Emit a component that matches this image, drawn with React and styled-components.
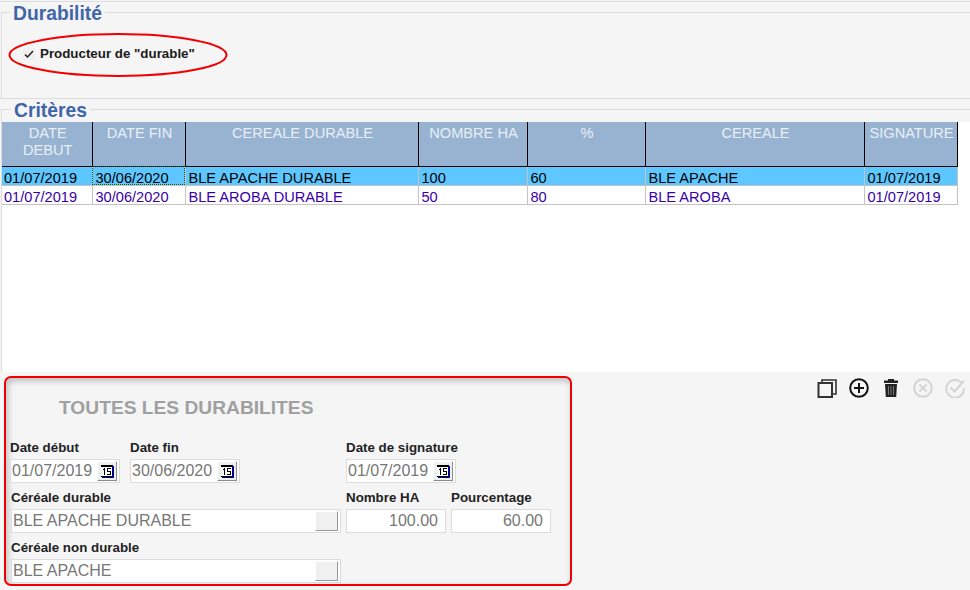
import React from 'react';
import styled, { createGlobalStyle } from 'styled-components';

const GlobalStyle = createGlobalStyle`
  html, body {
    margin: 0;
    padding: 0;
    background: #f5f5f5;
  }
  * {
    box-sizing: border-box;
  }
`;

const Page = styled.div`
  width: 970px;
  height: 590px;
  overflow: hidden;
  display: flex;
  flex-direction: column;
  background: #f5f5f5;
  font-family: "Liberation Sans", Arial, sans-serif;
  padding-top: 1px;
`;

const TopLine = styled.div`
  height: 1px;
  flex: none;
  background: #dcdcdc;
`;

const Section = styled.fieldset`
  margin: ${(props) => props.$top}px 0 0 1px;
  padding: 0;
  min-width: 0;
  flex: none;
  height: ${(props) => props.$height}px;
  border: 0;
  border-top: 1px solid #dcdcdc;
  border-left: 1px solid #dcdcdc;
`;

const SectionTitle = styled.legend`
  margin-left: ${(props) => props.$left}px;
  padding: ${(props) => props.$pad}px 3px 0;
  font-size: 19.3px;
  line-height: 20px;
  font-weight: bold;
  color: #3f66a8;
`;

const CheckRow = styled.div`
  display: flex;
  align-items: center;
  gap: 5px;
  padding: 22px 0 0 21px;
  position: relative;
  font-size: 13.33px;
  font-weight: bold;
  color: #1b1b1b;
`;

const CheckBox = styled.span`
  width: 12px;
  height: 12px;
  display: flex;
  background: #f0f0f0;
`;

const Ellipse = styled.svg`
  position: absolute;
  left: 4px;
  top: 8px;
`;

const Divider = styled.div`
  height: 1px;
  flex: none;
  background: #dcdcdc;
`;

const TableArea = styled.div`
  height: 250px;
  margin-top: 1px;
  background: #fff;
`;

const Grid = styled.table`
  width: 955px;
  border-collapse: collapse;
  table-layout: fixed;
  font-size: 14.6px;
`;

const HeadCell = styled.th`
  height: 44px;
  padding: 3px 3px 0 5px;
  vertical-align: top;
  text-align: center;
  font-weight: normal;
  line-height: 17px;
  background: #98b3d1;
  color: #e9eff6;
  border-right: 1px solid #000;
  border-bottom: 1px solid #000;
`;

const Cell = styled.td`
  height: 19px;
  padding: 4px 2px 0 3px;
  line-height: 14px;
  white-space: nowrap;
  overflow: hidden;
  color: ${(props) => (props.$selected ? '#000' : '#3a00a8')};
  background: ${(props) => (props.$selected ? '#5ec7ff' : '#fff')};
  border-right: 1px solid #c4c4c4;
  border-bottom: 1px solid #c4c4c4;
  outline: ${(props) => (props.$focus ? '1px dotted #1d5c2a' : 'none')};
  outline-offset: -1px;

  &:first-child {
    padding-left: 2px;
  }
`;

const BottomRow = styled.div`
  display: flex;
  align-items: flex-start;
  justify-content: space-between;
  padding: 4px 5px 0 4px;
`;

const FormPanel = styled.div`
  width: 568px;
  height: 210px;
  padding: 0 0 0 4px;
  border: 2px solid #f00000;
  border-radius: 7px;
  box-shadow: inset 2px 3px 6px #bdbdbd;
  background: #f5f5f5;
`;

const FormTitle = styled.div`
  margin: 20px 0 0 49px;
  height: 20px;
  font-size: 19.2px;
  line-height: 20px;
  font-weight: bold;
  color: #a0a0a0;
`;

const FieldRow = styled.div`
  display: flex;
  align-items: flex-end;
  margin-top: ${(props) => props.$top}px;
`;

const Field = styled.div`
  width: ${(props) => props.$width}px;
  margin-left: ${(props) => props.$left || 0}px;
  margin-right: ${(props) => props.$gap || 0}px;
  flex: none;
`;

const Label = styled.div`
  height: 20px;
  padding-top: 1px;
  font-size: 13.33px;
  line-height: 16px;
  font-weight: bold;
  color: #222;
  white-space: nowrap;
`;

const InputBox = styled.div`
  height: 24px;
  display: flex;
  align-items: center;
  justify-content: ${(props) => (props.$right ? 'flex-end' : 'space-between')};
  padding: ${(props) => (props.$right ? '0 7px 0 0' : '0 2px 0 1px')};
  background: #fff;
  border: 1px solid #dcdcdc;
  font-size: 16px;
  color: #777;
  white-space: nowrap;
`;

const DateButton = styled.span`
  width: 20px;
  height: 20px;
  display: flex;
  align-items: center;
  justify-content: center;
  background: #f0f0f0;
  border-right: 1px solid #8a8a8a;
  border-bottom: 1px solid #8a8a8a;
  border-top: 1px solid #fff;
  border-left: 1px solid #fff;
`;

const PickButton = styled.span`
  width: 23px;
  height: 20px;
  background: #f0f0f0;
  border-right: 1px solid #9a9a9a;
  border-bottom: 1px solid #9a9a9a;
  border-top: 1px solid #fff;
  border-left: 1px solid #fff;
`;

const Toolbar = styled.div`
  display: flex;
  align-items: center;
  gap: 12px;
  padding-top: 2px;
`;

const CalendarIcon = () => (
  <svg width="13" height="13" viewBox="0 0 13 13">
    <rect x="0" y="0" width="12" height="12" fill="#fff" />
    <rect x="0" y="0" width="12" height="2" fill="#000" />
    <rect x="0" y="11" width="12" height="1" fill="#000" />
    <rect x="11" y="1" width="2" height="12" fill="#000080" />
    <rect x="1" y="12" width="12" height="1" fill="#000080" />
    <path d="M3 3h1v7H3zM2 4h1v1H2zM6 3h4v1H7v2h3v4H6V9h3V7H6z" fill="#000" />
  </svg>
);

const CopyIcon = () => (
  <svg width="20" height="20" viewBox="0 0 20 20" fill="none" stroke="#333" strokeWidth="2">
    <path d="M5 5V2h14v14h-4" strokeWidth="1.6" />
    <rect x="1.5" y="5" width="13.5" height="14" />
  </svg>
);

const PlusIcon = () => (
  <svg width="20" height="20" viewBox="0 0 20 20" fill="none" stroke="#111" strokeWidth="2">
    <circle cx="10" cy="10" r="8.8" />
    <path d="M10 5v10M5 10h10" />
  </svg>
);

const TrashIcon = () => (
  <svg width="20" height="20" viewBox="0 0 20 20">
    <path d="M7 1h6v1.5h4V5H3V2.500h4z" fill="#222" />
    <path d="M4 6h12l-.8 13H4.800z" fill="#222" />
    <path d="M7 8h1v9H7zM9.500 8h1v9h-1zM12 8h1v9h-1z" fill="#777" />
  </svg>
);

const CancelIcon = () => (
  <svg width="20" height="20" viewBox="0 0 20 20" fill="none" stroke="#d4d4d4" strokeWidth="2">
    <circle cx="10" cy="10" r="8.800" />
    <path d="M6.500 6.500l7 7M13.500 6.500l-7 7" />
  </svg>
);

const ValidateIcon = () => (
  <svg width="20" height="20" viewBox="0 0 20 20" fill="none" stroke="#d4d4d4" strokeWidth="2">
    <path d="M17 5.500A8.800 8.800 0 1 0 18.800 10" />
    <path d="M5.500 9.500l4 4L19 3" />
  </svg>
);

const columns = [
  { title: 'DATE DEBUT', width: 90, key: 'debut' },
  { title: 'DATE FIN', width: 93, key: 'fin' },
  { title: 'CEREALE DURABLE', width: 233, key: 'durable' },
  { title: 'NOMBRE HA', width: 109, key: 'ha' },
  { title: '%', width: 118, key: 'pct' },
  { title: 'CEREALE', width: 219, key: 'cereale' },
  { title: 'SIGNATURE', width: 93, key: 'signature' },
];

const rows = [
  { debut: '01/07/2019', fin: '30/06/2020', durable: 'BLE APACHE DURABLE', ha: '100', pct: '60', cereale: 'BLE APACHE', signature: '01/07/2019' },
  { debut: '01/07/2019', fin: '30/06/2020', durable: 'BLE AROBA DURABLE', ha: '50', pct: '80', cereale: 'BLE AROBA', signature: '01/07/2019' },
];

function DateField({ label, value, gap }) {
  return (
    <Field $width={110} $gap={gap}>
      <Label>{label}</Label>
      <InputBox>
        {value}
        <DateButton><CalendarIcon /></DateButton>
      </InputBox>
    </Field>
  );
}

function PickField({ label, value }) {
  return (
    <Field $width={330} $left={1} $gap={5}>
      <Label>{label}</Label>
      <InputBox>
        {value}
        <PickButton />
      </InputBox>
    </Field>
  );
}

function NumberField({ label, value, gap }) {
  return (
    <Field $width={100} $gap={gap}>
      <Label>{label}</Label>
      <InputBox $right>{value}</InputBox>
    </Field>
  );
}

function App() {
  return (
    <Page>
      <GlobalStyle />
      <TopLine />
      <Section $top={-2} $height={98}>
        <SectionTitle $left={8} $pad={4}>Durabilité</SectionTitle>
        <CheckRow>
          <CheckBox>
            <svg width="12" height="12" viewBox="0 0 12 12" fill="none" stroke="#222" strokeWidth="1.5">
              <path d="M2 6.500l2.500 2.500L10 3" />
            </svg>
          </CheckBox>
          Producteur de "durable"
          <Ellipse width="224" height="48" viewBox="0 0 224 48" fill="none" stroke="#f00000" strokeWidth="2">
            <ellipse cx="112" cy="23" rx="108.500" ry="21" />
          </Ellipse>
        </CheckRow>
      </Section>
      <Divider />
      <Section $top={-1} $height={274}>
        <SectionTitle $left={9} $pad={3}>Critères</SectionTitle>
        <TableArea>
          <Grid>
            <colgroup>
              {columns.map((col) => <col key={col.key} width={col.width} />)}
            </colgroup>
            <thead>
              <tr>
                {columns.map((col) => <HeadCell key={col.key}>{col.title}</HeadCell>)}
              </tr>
            </thead>
            <tbody>
              {rows.map((row, i) => (
                <tr key={row.durable}>
                  {columns.map((col) => (
                    <Cell key={col.key} $selected={i === 0} $focus={i === 0 && col.key === 'fin'}>
                      {row[col.key]}
                    </Cell>
                  ))}
                </tr>
              ))}
            </tbody>
          </Grid>
        </TableArea>
      </Section>
      <BottomRow>
        <FormPanel>
          <FormTitle>TOUTES LES DURABILITES</FormTitle>
          <FieldRow $top={21}>
            <DateField label="Date début" value="01/07/2019" gap={10} />
            <DateField label="Date fin" value="30/06/2020" gap={106} />
            <DateField label="Date de signature" value="01/07/2019" />
          </FieldRow>
          <FieldRow $top={6}>
            <PickField label="Céréale durable" value="BLE APACHE DURABLE" />
            <NumberField label="Nombre HA" value="100.00" gap={5} />
            <NumberField label="Pourcentage" value="60.00" />
          </FieldRow>
          <FieldRow $top={6}>
            <PickField label="Céréale non durable" value="BLE APACHE" />
          </FieldRow>
        </FormPanel>
        <Toolbar>
          <CopyIcon />
          <PlusIcon />
          <TrashIcon />
          <CancelIcon />
          <ValidateIcon />
        </Toolbar>
      </BottomRow>
    </Page>
  );
}

export default App;
